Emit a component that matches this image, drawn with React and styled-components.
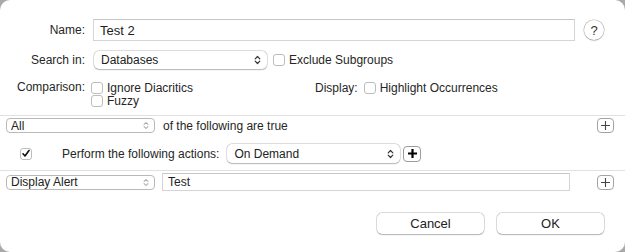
import React from 'react';
import styled, { createGlobalStyle } from 'styled-components';

const Global = createGlobalStyle`
  html, body { margin: 0; padding: 0; }
  body {
    background: #a9a9a9;
    width: 625px;
    height: 252px;
    overflow: hidden;
    font-family: "Liberation Sans", Arial, sans-serif;
  }
`;

const Window = styled.div`
  width: 625px;
  height: 252px;
  box-sizing: border-box;
  background: #fff;
  border-radius: 10px;
  color: #262626;
  font-size: 12px;
  display: flex;
  flex-direction: column;
  padding-top: 19px;
`;

const Row = styled.div`
  display: flex;
  align-items: ${p => p.$align || 'center'};
  height: ${p => (p.$h ? `${p.$h}px` : 'auto')};
  margin-top: ${p => p.$mt || 0}px;
  padding-left: ${p => p.$pl || 0}px;
  padding-right: ${p => p.$pr || 0}px;
`;

const Label = styled.span`
  width: ${p => p.$w || 85}px;
  text-align: right;
  margin-right: ${p => p.$mr ?? 8}px;
  flex: none;
  white-space: nowrap;
  line-height: ${p => p.$lh || 14}px;
`;

const TextField = styled.div`
  box-sizing: border-box;
  width: ${p => p.$w}px;
  height: ${p => p.$h}px;
  border: 1px solid #d4d4d4;
  border-top-color: #c6c6c6;
  background: #fff;
  display: flex;
  align-items: center;
  padding-left: ${p => p.$pl || 6}px;
  font-size: ${p => p.$fs || 12}px;
  color: #1e1e1e;
  flex: none;
`;

const HelpButton = styled.div`
  width: 20px;
  height: 20px;
  border-radius: 50%;
  margin-left: 9px;
  background: #fff;
  box-shadow: 0 0 0 0.5px rgba(0,0,0,0.25), 0 0.5px 1.5px rgba(0,0,0,0.25);
  display: flex;
  align-items: center;
  justify-content: center;
  font-size: 13px;
  color: #333;
  flex: none;
`;

const Popup = styled.div`
  box-sizing: border-box;
  width: ${p => p.$w}px;
  height: ${p => p.$h}px;
  background: #fff;
  border-radius: 5px;
  box-shadow: 0 0 0 0.5px rgba(0,0,0,0.2), 0 0.5px 1.5px rgba(0,0,0,0.22);
  display: flex;
  align-items: center;
  justify-content: space-between;
  padding: 0 6px 0 7px;
  margin-left: ${p => p.$ml || 0}px;
  flex: none;
  color: #222;
`;

const SmallPopup = styled.div`
  box-sizing: border-box;
  width: ${p => p.$w}px;
  height: ${p => p.$h || 15}px;
  background: #fff;
  border: 1px solid #b9b9b9;
  border-radius: 4px;
  display: flex;
  align-items: center;
  justify-content: space-between;
  padding: 0 5px 0 4px;
  flex: none;
  color: #222;
`;

const Check = styled.span`
  box-sizing: border-box;
  width: 12px;
  height: 12px;
  border: 1px solid #bdbdbd;
  border-radius: 3px;
  background: #fff;
  flex: none;
  display: inline-flex;
  align-items: center;
  justify-content: center;
  margin-left: ${p => p.$ml || 0}px;
  margin-right: ${p => p.$mr ?? 4}px;
`;

const CheckItem = styled.div`
  display: flex;
  align-items: center;
  height: 13px;
  white-space: nowrap;
`;

const CheckCol = styled.div`
  display: flex;
  flex-direction: column;
  width: ${p => p.$w}px;
  flex: none;
`;

const Divider = styled.div`
  height: 1px;
  background: #e1e1e1;
  margin-top: ${p => p.$mt || 0}px;
`;

const Text = styled.span`
  margin-left: ${p => p.$ml || 0}px;
  white-space: nowrap;
`;

const Spacer = styled.div`
  flex: 1;
`;

const PlusButton = styled.div`
  box-sizing: border-box;
  width: ${p => p.$w || 17}px;
  height: ${p => p.$h || 15}px;
  border: 1px solid ${p => (p.$bold ? '#9c9c9c' : '#a4a4a4')};
  border-radius: 4px;
  background: #fff;
  display: flex;
  align-items: center;
  justify-content: center;
  margin-left: ${p => p.$ml || 0}px;
  flex: none;
`;

const Footer = styled.div`
  display: flex;
  justify-content: flex-end;
  gap: 13px;
  padding-right: 21px;
  margin-top: 22px;
`;

const PushButton = styled.div`
  width: ${p => p.$w}px;
  height: 21px;
  border-radius: 5px;
  background: #fff;
  box-shadow: 0 0 0 0.5px rgba(0,0,0,0.22), 0 0.5px 1.5px rgba(0,0,0,0.22);
  display: flex;
  align-items: center;
  justify-content: center;
  font-size: 13px;
  color: #222;
`;

const Chevrons = ({ color = '#333', w = 7, h = 10 }) => (
  <svg width={w} height={h} viewBox="0 0 7 10" fill="none">
    <path d="M1.2 3.8 L3.5 1.5 L5.8 3.8" stroke={color} strokeWidth="1.2" strokeLinecap="round" strokeLinejoin="round" />
    <path d="M1.2 6.2 L3.5 8.5 L5.8 6.2" stroke={color} strokeWidth="1.2" strokeLinecap="round" strokeLinejoin="round" />
  </svg>
);

const PlusIcon = ({ bold }) => (
  <svg width="11" height="11" viewBox="0 0 11 11">
    <path d="M5.5 1 V10 M1 5.5 H10" stroke={bold ? '#000' : '#444'} strokeWidth={bold ? 2.2 : 1.1} />
  </svg>
);

const CheckMark = () => (
  <svg width="10" height="9" viewBox="0 0 10 9" fill="none">
    <path d="M2 4.8 L4 7 L8 1.5" stroke="#111" strokeWidth="1.6" strokeLinecap="round" strokeLinejoin="round" />
  </svg>
);

export default function App() {
  return (
    <>
      <Global />
      <Window>
        <Row $h={22}>
          <Label>Name:</Label>
          <TextField $w={482} $h={22} $fs={13} $pl={6}>Test 2</TextField>
          <HelpButton>?</HelpButton>
        </Row>

        <Row $h={18} $mt={10}>
          <Label $mr={9}>Search in:</Label>
          <Popup $w={173} $h={18}>
            <span>Databases</span>
            <Chevrons />
          </Popup>
          <Check $ml={6}>
          </Check>
          <Text>Exclude Subgroups</Text>
        </Row>

        <Row $align="flex-start" $mt={12}>
          <Label $mr={6} $lh={13}>Comparison:</Label>
          <CheckCol $w={224}>
            <CheckItem><Check />Ignore Diacritics</CheckItem>
            <CheckItem><Check />Fuzzy</CheckItem>
          </CheckCol>
          <CheckItem>
            <Text>Display:</Text>
            <Check $ml={6} />
            Highlight Occurrences
          </CheckItem>
        </Row>

        <Divider $mt={8} />

        <Row $h={15} $mt={2} $pl={6} $pr={11}>
          <SmallPopup $w={149}>
            <span>All</span>
            <Chevrons color="#aaa" w={6} h={9} />
          </SmallPopup>
          <Text $ml={8}>of the following are true</Text>
          <Spacer />
          <PlusButton><PlusIcon /></PlusButton>
        </Row>

        <Row $h={19} $mt={11} $pl={20}>
          <Check $mr={0}><CheckMark /></Check>
          <Text $ml={30}>Perform the following actions:</Text>
          <Popup $w={173} $h={19} $ml={8}>
            <span>On Demand</span>
            <Chevrons />
          </Popup>
          <PlusButton $bold $w={18} $h={16} $ml={3}><PlusIcon bold /></PlusButton>
        </Row>

        <Divider $mt={7} />

        <Row $h={18} $mt={2} $pl={6} $pr={11}>
          <SmallPopup $w={149}>
            <span>Display Alert</span>
            <Chevrons color="#aaa" w={6} h={9} />
          </SmallPopup>
          <TextField $w={408} $h={18} $pl={5} style={{ marginLeft: 7 }}>Test</TextField>
          <Spacer />
          <PlusButton><PlusIcon /></PlusButton>
        </Row>

        <Footer>
          <PushButton $w={107}>Cancel</PushButton>
          <PushButton $w={107}>OK</PushButton>
        </Footer>
      </Window>
    </>
  );
}
